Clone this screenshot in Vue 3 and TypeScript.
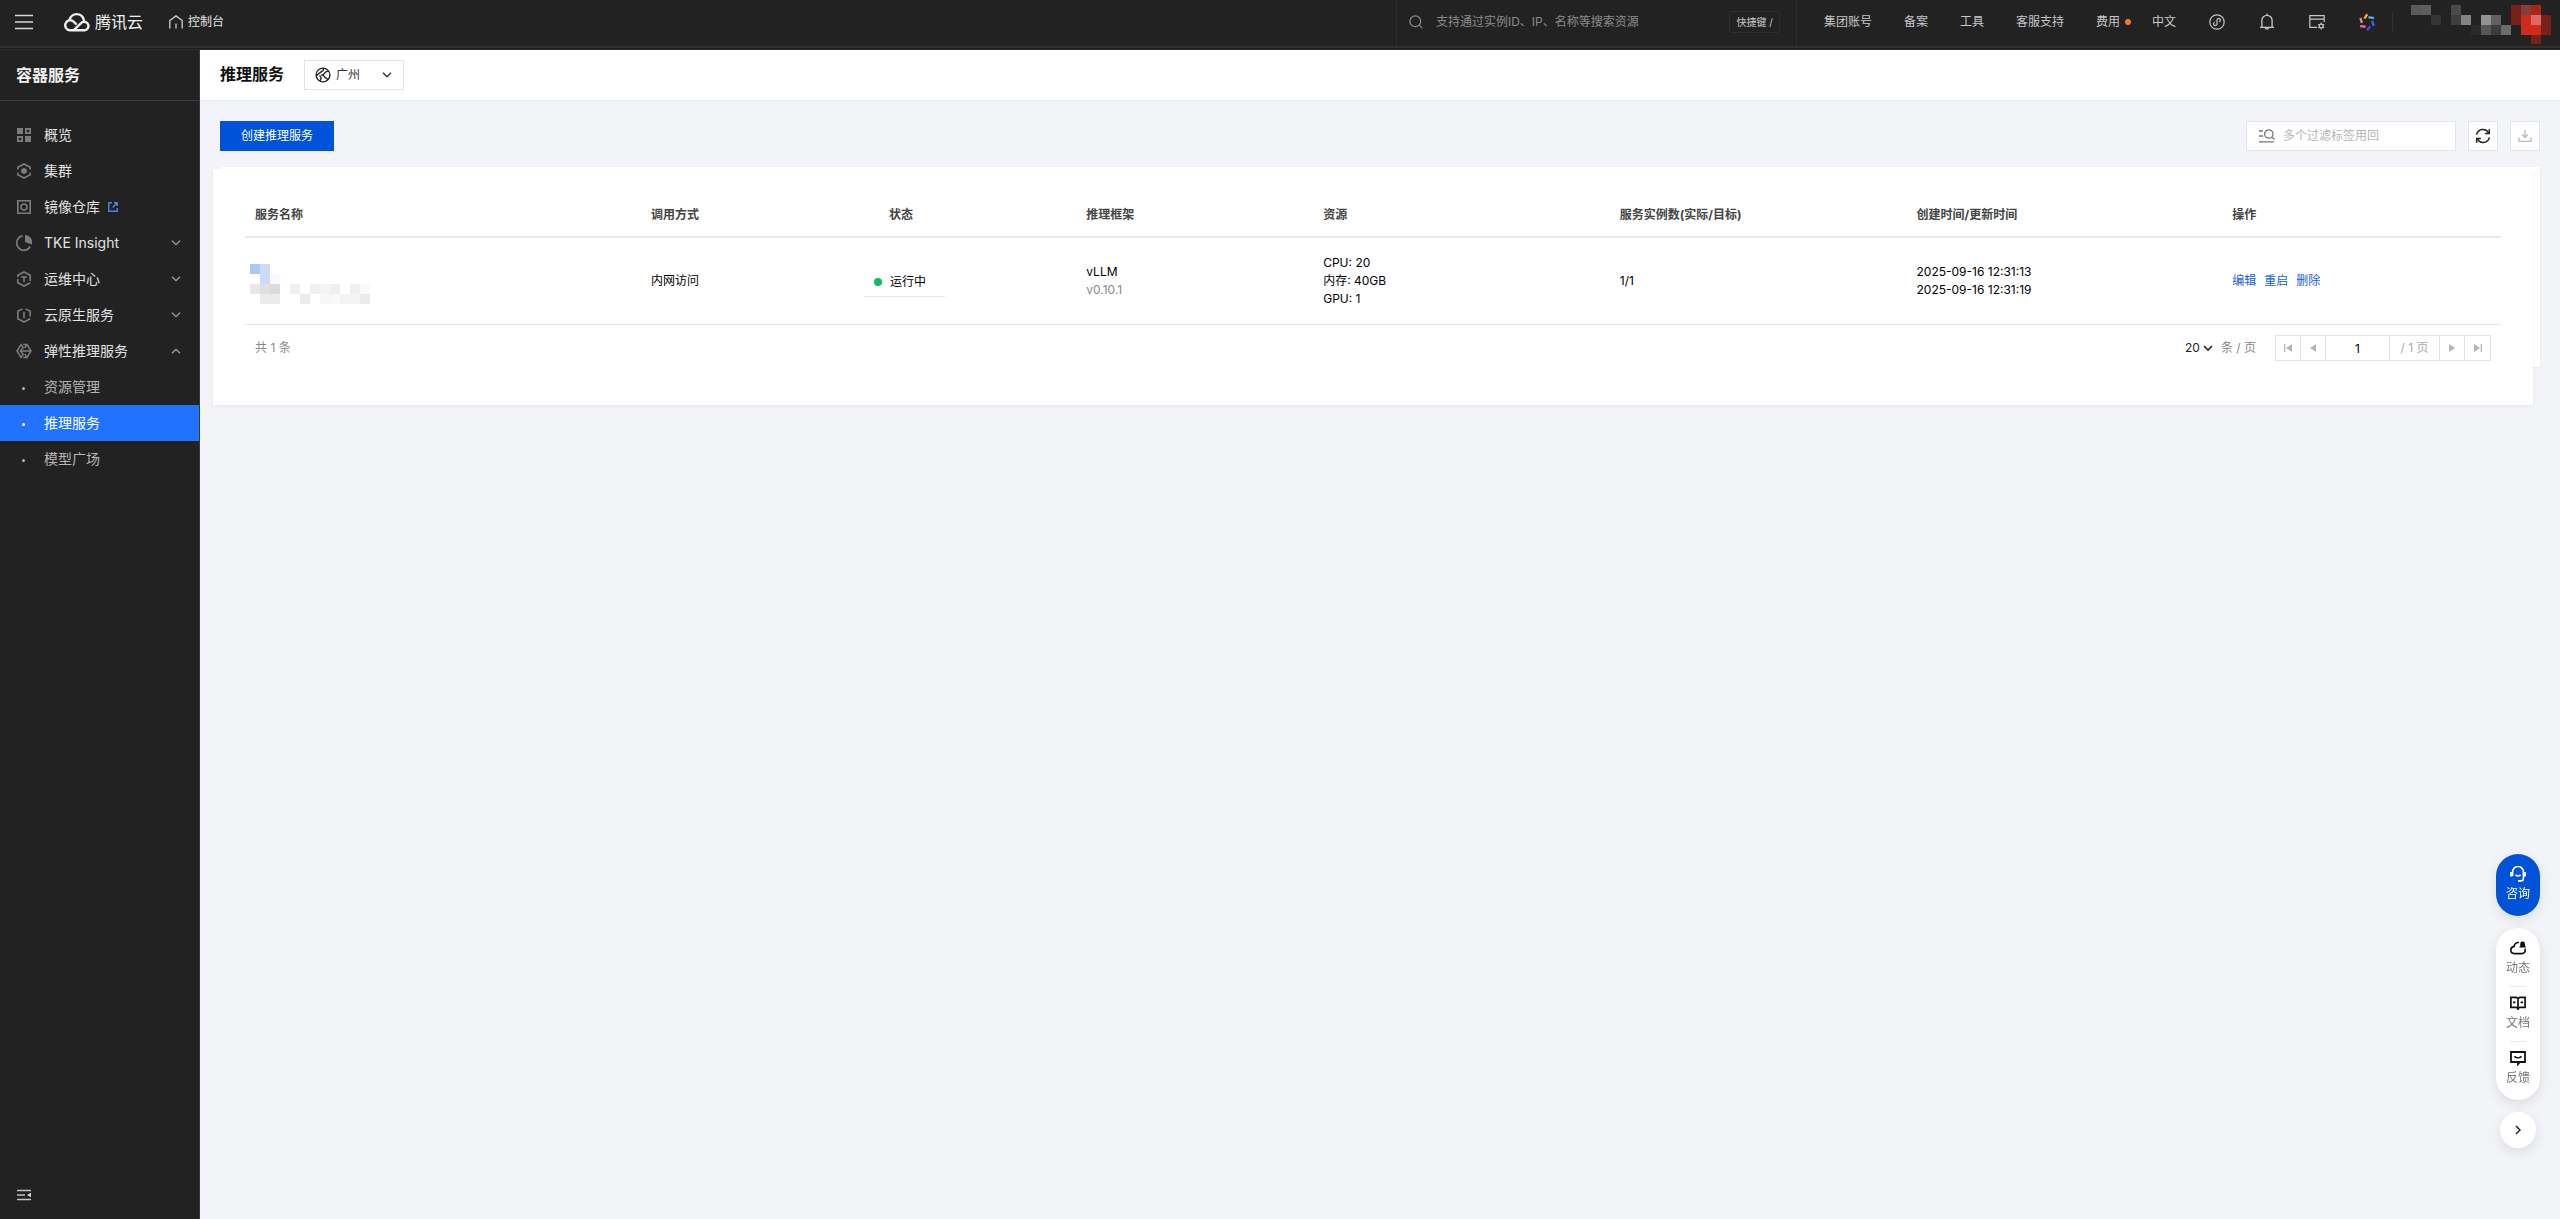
<script setup lang="ts">
import { ref } from 'vue'

interface MenuEntry {
  label: string
  icon: string
  external?: boolean
  arrow?: 'down' | 'up'
}

interface Tile {
  x: number
  y: number
  c: string
}

const menu: MenuEntry[] = [
  { label: '概览', icon: 'grid' },
  { label: '集群', icon: 'cluster' },
  { label: '镜像仓库', icon: 'registry', external: true },
  { label: 'TKE Insight', icon: 'insight', arrow: 'down' },
  { label: '运维中心', icon: 'ops', arrow: 'down' },
  { label: '云原生服务', icon: 'native', arrow: 'down' },
  { label: '弹性推理服务', icon: 'infer', arrow: 'up' },
]
const subMenu = ['资源管理', '推理服务', '模型广场']
const activeSub = ref('推理服务')

const navLinks = ['集团账号', '备案', '工具', '客服支持', '费用', '中文']
const headers = ['服务名称', '调用方式', '状态', '推理框架', '资源', '服务实例数(实际/目标)', '创建时间/更新时间', '操作']

const accountTiles: Tile[] = [
  { x: 0, y: 0, c: '#5a5a5a' }, { x: 1, y: 0, c: '#5e5e5e' }, { x: 2, y: 1, c: '#353535' },
  { x: 4, y: 0, c: '#4a4a4a' }, { x: 4, y: 1, c: '#3e3e3e' }, { x: 5, y: 1, c: '#838383' },
  { x: 6, y: 2, c: '#2a2a2a' }, { x: 7, y: 1, c: '#929292' }, { x: 7, y: 2, c: '#565656' },
  { x: 8, y: 1, c: '#616161' }, { x: 8, y: 2, c: '#3c3c3c' }, { x: 9, y: 2, c: '#6c6c6c' },
  { x: 10, y: 0, c: '#78211b' }, { x: 10, y: 1, c: '#78211b' }, { x: 11, y: 0, c: '#823f3b' },
  { x: 11, y: 1, c: '#d12a1b' }, { x: 11, y: 2, c: '#d12a1b' }, { x: 12, y: 0, c: '#a72519' },
  { x: 12, y: 1, c: '#dd6b62' }, { x: 12, y: 2, c: '#d12a1b' }, { x: 12, y: 3, c: '#78211b' },
  { x: 13, y: 1, c: '#78211b' }, { x: 13, y: 2, c: '#78211b' },
]
const nameTiles: Tile[] = [
  { x: 0, y: 0, c: '#adc6f3' }, { x: 1, y: 0, c: '#ccdcf8' }, { x: 1, y: 1, c: '#ccdcf8' }, { x: 2, y: 1, c: '#f7faff' },
  { x: 0, y: 2, c: '#e8e8e8' }, { x: 1, y: 2, c: '#e0e0e0' }, { x: 2, y: 2, c: '#dbdbdb' },
  { x: 1, y: 3, c: '#ebebeb' }, { x: 2, y: 3, c: '#ebebeb' }, { x: 4, y: 2, c: '#efefef' }, { x: 5, y: 3, c: '#ebebeb' },
  { x: 6, y: 2, c: '#f0f0f0' }, { x: 7, y: 2, c: '#f4f4f4' }, { x: 8, y: 2, c: '#efefef' }, { x: 10, y: 2, c: '#f0f0f0' },
  { x: 11, y: 2, c: '#fafafa' }, { x: 7, y: 3, c: '#f7f7f7' }, { x: 8, y: 3, c: '#f9f9f9' }, { x: 9, y: 3, c: '#f3f3f3' },
  { x: 10, y: 3, c: '#f3f3f3' }, { x: 11, y: 3, c: '#ebebeb' },
]

const keyword = ref('')
const filter = ref('')
const page = ref('1')
const pageSize = ref('20')
const region = ref('广州')
</script>

<template>
  <div class="app">
    <header class="topbar">
      <button class="plain burger" aria-label="菜单">
        <svg width="18" height="16" viewBox="0 0 18 16" stroke="#d8d8d8" stroke-width="1.4"><path d="M0 1.5h18M0 8h18M0 14.5h18" /></svg>
      </button>
      <a class="logo" href="#">
        <svg width="26" height="20" viewBox="0 0 26 20" fill="none" stroke="#f0f0f0" stroke-width="2.4" stroke-linecap="round" stroke-linejoin="round">
          <path d="M9.5 18.3 18.2 10.2A4.3 4.3 0 1 1 20.6 18.3H6.4A5 5 0 1 1 9.6 9.6L12 11.8" />
          <path d="M5.6 7.6A7.3 7.3 0 0 1 19.8 7.8" />
        </svg>
        <span>腾讯云</span>
      </a>
      <a class="console" href="#">
        <svg width="14" height="14" viewBox="0 0 14 14" fill="none" stroke="#d0d0d0" stroke-width="1.3"><path d="M.8 13.4V5.6L7 .9l6.2 4.7v7.8M7 8.6v4.8" /></svg>
        <span>控制台</span>
      </a>
      <label class="search">
        <svg width="14" height="14" viewBox="0 0 14 14" fill="none" stroke="#8c8c8c" stroke-width="1.2"><circle cx="6.3" cy="6.3" r="5.4" /><path d="m10.2 10.2 3.2 3.2" /></svg>
        <input v-model="keyword" type="text" aria-label="搜索资源" placeholder="支持通过实例ID、IP、名称等搜索资源" />
        <span class="hotkey">快捷键 /</span>
      </label>
      <nav class="links">
        <a v-for="l in navLinks" :key="l" href="#">{{ l }}<i v-if="l === '费用'" class="badge"></i></a>
      </nav>
      <div class="tools">
        <button class="plain" aria-label="小程序">
          <svg width="16" height="16" viewBox="0 0 16 16" fill="none" stroke="#c8c8c8" stroke-width="1.2"><circle cx="8" cy="8" r="7.2" /><path d="M5.8 8.2A1.7 1.7 0 1 0 8 9.9V6.1a1.7 1.7 0 1 1 2.2 1.7" /></svg>
        </button>
        <button class="plain" aria-label="消息">
          <svg width="16" height="18" viewBox="0 0 16 18" fill="none" stroke="#c8c8c8" stroke-width="1.3"><path d="M1 14.3h14M2.9 14V7.4a5.1 5.1 0 0 1 10.2 0V14M8 .4v1.9M6.2 14.8a1.9 1.9 0 0 0 3.6 0" /></svg>
        </button>
        <button class="plain" aria-label="控制台设置">
          <svg width="16" height="16" viewBox="0 0 16 16" fill="none" stroke="#c8c8c8" stroke-width="1.2"><path d="M8 13.4H.8V1.6h14.4V8M.8 5.2h14.4" /><circle cx="12.2" cy="12" r="1.9" /><path d="M12.2 8.6v1.5M12.2 13.9v1.5M9.2 10.3l1.3.8M13.9 12.9l1.3.8M9.2 13.7l1.3-.8M13.9 11.1l1.3-.8" /></svg>
        </button>
        <button class="plain" aria-label="智能助手">
          <svg width="18" height="18" viewBox="0 0 18 18" fill="none" stroke-width="2.3" stroke-linecap="square">
            <path d="M7 4.6 8.6 2.2" stroke="#f7b01e" /><path d="m11.6 4.4 3.2.6" stroke="#4cb6f2" /><path d="m14.4 9 1 2.8" stroke="#2f6cf0" />
            <path d="m11.6 14.2-1.8 2.2" stroke="#4b45e8" /><path d="m6.4 13.6-3-.4" stroke="#f06ba5" /><path d="m3.6 8.8-.9-2.8" stroke="#f58a7c" />
          </svg>
        </button>
      </div>
      <svg class="account" width="140" height="39" viewBox="0 0 140 39" shape-rendering="crispEdges">
        <rect v-for="(t, i) in accountTiles" :key="i" :x="t.x * 10" :y="t.y * 10" width="10" height="10" :fill="t.c" />
      </svg>
    </header>

    <div class="body">
      <aside class="side">
        <h2>容器服务</h2>
        <ul class="menu">
          <li v-for="m in menu" :key="m.label">
            <a href="#">
              <span class="mi">
                <svg width="16" height="16" viewBox="0 0 16 16" fill="none" stroke="#7d7d7d" stroke-width="1.6">
                  <template v-if="m.icon === 'grid'">
                    <path d="M1 1h6v6H1zM9 9h6v6H9z" fill="#7d7d7d" stroke="none" /><path d="M9.9 1.9h4.2v4.2H9.9zM1.9 9.9h4.2v4.2H1.9z" stroke-width="1.8" />
                  </template>
                  <template v-else-if="m.icon === 'cluster'">
                    <path d="M1.8 6.6V4.3L8 1l6.2 3.3v2.3M1.8 9.4v2.3L8 15l6.2-3.3V9.4" /><path d="m8 4.8 2.9 1.6v3.2L8 11.2 5.1 9.6V6.4z" fill="#7d7d7d" stroke="none" />
                  </template>
                  <template v-else-if="m.icon === 'registry'"><path d="M1.8 1.8h12.4v12.4H1.8z" /><circle cx="8" cy="8" r="3" /></template>
                  <template v-else-if="m.icon === 'insight'">
                    <path d="M6.6.9a7.2 7.2 0 1 0 7.6 10.6" /><path d="M9 0a7.4 7.4 0 0 1 6.9 9.6L9 7z" fill="#7d7d7d" stroke="none" />
                  </template>
                  <template v-else-if="m.icon === 'ops'">
                    <path d="M1.8 6V4.3L8 1l6.2 3.3V10M1.8 8v3.7L8 15l6.2-3.3" /><path d="M5 6h6M8 6v5" />
                  </template>
                  <template v-else-if="m.icon === 'native'">
                    <path d="M6.4 1.9 1.8 4.3v7.4L8 15l6.2-3.3M9.6 1.9l4.6 2.4V9.6" /><path d="M8 4.8v6.4" />
                  </template>
                  <template v-else>
                    <path d="M5.4.8 1 8l4.4 7.2M10.6.8 15 8l-4.4 7.2M5 1.6l2.2 3.2L4.4 8l2.8 3.2L5 14.4M7.2 1.6h3.6L8.8 5M7.2 14.4h3.6L8.8 11M4.4 8h10" stroke-width="1.5" />
                  </template>
                </svg>
              </span>
              <span class="mt">{{ m.label }}</span>
              <svg v-if="m.external" class="ext" width="10" height="10" viewBox="0 0 10 10" fill="none" stroke="#5185dd" stroke-width="1.4"><path d="M4 .8H.8v8.4h8.4V6M6 .8h3.2V4M9 1 4.6 5.4" /></svg>
              <svg v-if="m.arrow" class="arr" :class="m.arrow" width="10" height="6" viewBox="0 0 10 6" fill="none" stroke="#a0a0a0" stroke-width="1.3"><path d="m1 .7 4 4 4-4" /></svg>
            </a>
          </li>
          <li v-for="s in subMenu" :key="s" class="sub" :class="{ on: s === activeSub }">
            <a href="#" @click.prevent="activeSub = s"><span class="mi"><i></i></span><span class="mt">{{ s }}</span></a>
          </li>
        </ul>
        <button class="plain fold" aria-label="收起导航">
          <svg width="14" height="12" viewBox="0 0 14 12"><path d="M0 1.5h14M0 10.5h14M0 6h8" stroke="#c4c4c4" stroke-width="1.3" /><path d="M14 3.8v4.4L10 6z" fill="#d8d8d8" /></svg>
        </button>
      </aside>

      <main class="main">
        <div class="title">
          <h1>推理服务</h1>
          <label class="region">
            <svg width="16" height="16" viewBox="0 0 16 16" fill="none" stroke="#222" stroke-width="1.4"><circle cx="8" cy="8" r="6.9" /><path d="M8.8 1.2 8 3.6 4.8 5.8 1.4 8.6M5 14 6.2 11 4.6 8.4M13.4 3.8 10.6 5 8 8l1.6 2 3.6 2.6M8 8H6.2" /></svg>
            <select v-model="region" aria-label="地域"><option>广州</option></select>
            <svg width="10" height="6" viewBox="0 0 10 6" fill="none" stroke="#333" stroke-width="1.4"><path d="m1 .7 4 4 4-4" /></svg>
          </label>
        </div>

        <div class="content">
          <div class="toolbar">
            <button class="primary">创建推理服务</button>
            <label class="filter">
              <svg width="16" height="14" viewBox="0 0 16 14" fill="none" stroke="#777" stroke-width="1.3"><path d="M0 2h4M0 7h4M0 12.9h15" /><circle cx="9.8" cy="5" r="4.2" /><path d="m12.8 8 2.8 2.4" /></svg>
              <input v-model="filter" type="text" aria-label="过滤标签" placeholder="多个过滤标签用回" />
            </label>
            <button class="square" aria-label="刷新">
              <svg width="16" height="16" viewBox="0 0 16 16" fill="none" stroke="#222" stroke-width="1.5"><path d="M1.6 6.6A6.5 6.5 0 0 1 13.6 4.8M14.4 9.4A6.5 6.5 0 0 1 2.4 11.2" /><path d="M14.3 1.2v4.2h-4.2M1.7 14.8v-4.2h4.2" /></svg>
            </button>
            <button class="square" aria-label="下载">
              <svg width="14" height="14" viewBox="0 0 14 14" fill="none" stroke="#bbb" stroke-width="1.4"><path d="M1 8.4v4h12v-4M7 1v7M4 5.4l3 3 3-3" /></svg>
            </button>
          </div>

          <div class="stack">
            <section class="card">
              <table>
                <thead>
                  <tr><th v-for="(h, i) in headers" :key="h" :class="'c' + i" scope="col">{{ h }}</th></tr>
                </thead>
                <tbody>
                  <tr>
                    <td class="masked">
                      <svg width="120" height="40" viewBox="0 0 120 40" shape-rendering="crispEdges">
                        <rect v-for="(t, i) in nameTiles" :key="i" :x="t.x * 10" :y="t.y * 10" width="10" height="10" :fill="t.c" />
                      </svg>
                    </td>
                    <td>内网访问</td>
                    <td><span class="status"><i></i>运行中</span></td>
                    <td>vLLM<br /><span class="muted">v0.10.1</span></td>
                    <td>CPU: 20<br />内存: 40GB<br />GPU: 1</td>
                    <td>1/1</td>
                    <td>2025-09-16 12:31:13<br />2025-09-16 12:31:19</td>
                    <td><div class="ops"><a href="#">编辑</a><a href="#">重启</a><a href="#">删除</a></div></td>
                  </tr>
                </tbody>
              </table>
              <div class="pager">
                <span class="total">共 1 条</span>
                <label class="size">
                  <select v-model="pageSize" aria-label="每页条数"><option>20</option></select>
                  <svg width="10" height="7" viewBox="0 0 10 7" fill="none" stroke="#222" stroke-width="1.6"><path d="m1 1 4 4 4-4" /></svg>
                  <span>条 / 页</span>
                </label>
                <div class="pages">
                  <button disabled aria-label="首页"><svg width="8" height="8" viewBox="0 0 8 8" fill="#b5b5b5"><path d="M0 0h1.3v8H0zM8 0v8L2 4z" /></svg></button>
                  <button disabled aria-label="上一页"><svg width="8" height="8" viewBox="0 0 8 8" fill="#b5b5b5"><path d="M7 0v8L1 4z" /></svg></button>
                  <input v-model="page" type="text" aria-label="页码" />
                  <span class="of">/ 1 页</span>
                  <button disabled aria-label="下一页"><svg width="8" height="8" viewBox="0 0 8 8" fill="#b5b5b5"><path d="M1 0v8l6-4z" /></svg></button>
                  <button disabled aria-label="末页"><svg width="8" height="8" viewBox="0 0 8 8" fill="#b5b5b5"><path d="M0 0v8l6-4zM6.7 0H8v8H6.7z" /></svg></button>
                </div>
              </div>
            </section>
          </div>
        </div>
      </main>
    </div>

    <div class="float">
      <button class="ask">
        <svg width="16" height="16" viewBox="0 0 16 16" fill="none" stroke="#fff" stroke-width="1.6"><path d="M2.6 10V5.9a5.4 5.4 0 0 1 10.8 0v6.3c0 1.6-1 2.7-2.6 2.7H8" /><path d="M1.2 6v4.6M14.8 6v4.6" stroke-width="2.2" /><path d="M5.4 8.8c1.6 1.5 3.6 1.5 5.2 0" /></svg>
        <span>咨询</span>
      </button>
      <div class="pill">
        <button>
          <svg width="16" height="16" viewBox="0 0 16 16" fill="none" stroke="#111" stroke-width="1.6"><path d="M9 2.5C6.2 2.1 4.4 4 4.2 6.4 2 6.8.8 8.2.8 10.1c0 2 1.5 3.5 3.6 3.5h7.2c2.3 0 3.6-1.4 3.6-3.3 0-.6-.1-1.1-.4-1.6" /><path d="M10.2 6.6V4a2.4 2.4 0 0 1 4.8 0v2.6h1v1H9.4v-1z" fill="#111" stroke="none" /></svg>
          <span>动态</span>
        </button>
        <button>
          <svg width="16" height="16" viewBox="0 0 16 16" fill="none" stroke="#111" stroke-width="1.7"><path d="M.9 2.4h5.4L8 3.4l1.7-1h5.4v10H9.8L8 13.6l-1.8-1.2H.9zM8 3v12M3 7.4h2.4M10.6 7.4H13" /></svg>
          <span>文档</span>
        </button>
        <button>
          <svg width="16" height="16" viewBox="0 0 16 16" fill="none" stroke="#111" stroke-width="1.8"><path d="M1 2h14v10H9.8L8 14.2V12H1z" /><path d="M4.4 6.4c2 1.8 5.2 1.8 7.2 0" stroke-width="1.5" /></svg>
          <span>反馈</span>
        </button>
      </div>
      <button class="next" aria-label="收起">
        <svg width="6" height="10" viewBox="0 0 6 10" fill="none" stroke="#222" stroke-width="1.5"><path d="m1 1 4 4-4 4" /></svg>
      </button>
    </div>
  </div>
</template>

<style>
html,
body,
#app {
  height: 100%;
}
body {
  margin: 0;
}
</style>

<style scoped>
.app {
  display: flex;
  flex-direction: column;
  min-height: 100%;
  position: relative;
  background: #f3f4f7;
  color: #000;
  font: 12px/18px Inter, 'Noto Sans CJK SC', sans-serif;
}
.app * {
  box-sizing: border-box;
}
svg {
  display: block;
  flex: none;
}
a {
  color: inherit;
  text-decoration: none;
}
button,
input,
select {
  margin: 0;
  padding: 0;
  font: inherit;
  color: inherit;
  outline: none;
  border-radius: 0;
}
select {
  appearance: none;
  border: 0;
  background: none;
}
.plain {
  display: flex;
  align-items: center;
  justify-content: center;
  border: 0;
  background: none;
}

.topbar {
  display: flex;
  align-items: center;
  height: 50px;
  padding: 0 9px 7px 15px;
  background: linear-gradient(#222 0 46px, #303030 46px 48px, #1c1c1c 48px 49px, #2b2b2b 49px);
  color: #c8c8c8;
}
.burger {
  width: 18px;
}
.logo {
  display: flex;
  align-items: center;
  gap: 5px;
  margin-left: 31px;
  color: #f0f0f0;
  font-size: 16px;
}
.console {
  display: flex;
  align-items: center;
  gap: 5px;
  margin-left: 26px;
  color: #e6e6e6;
}
.search {
  display: flex;
  align-items: center;
  width: 401px;
  height: 48px;
  margin: 0 11px 0 auto;
  padding: 0 16px 0 12px;
  border: solid #2e2e2e;
  border-width: 0 1px;
}
.search input {
  flex: 1;
  min-width: 0;
  margin-left: 13px;
  border: 0;
  background: none;
}
.search input::placeholder {
  color: #8c8c8c;
  opacity: 1;
}
.hotkey {
  padding: 0 6px;
  border: 1px solid #2e2e2e;
  border-radius: 2px;
  font-size: 10px;
  line-height: 20px;
}
.links {
  display: flex;
}
.links a {
  position: relative;
  padding: 0 16px;
}
.badge {
  position: absolute;
  top: 6px;
  right: 5px;
  width: 6px;
  height: 6px;
  border-radius: 50%;
  background: #ed7b2f;
}
.tools {
  display: flex;
  border-right: 1px solid #333;
}
.tools .plain {
  width: 50px;
  height: 18px;
}
.account {
  margin: 5px 0 0 18px;
  align-self: flex-start;
}

.body {
  display: flex;
  flex: 1;
}
.side {
  display: flex;
  flex-direction: column;
  width: 200px;
  flex: none;
  border-right: 1px solid #3a3a3a;
  background: #222;
  color: #e3e3e3;
  font-size: 14px;
}
.side h2 {
  margin: 0;
  padding: 0 16px;
  border-bottom: 1px solid #3a3a3a;
  color: #f0f0f0;
  font-size: 16px;
  line-height: 50px;
}
.menu {
  flex: 1;
  margin: 0;
  padding: 16px 0;
  list-style: none;
}
.menu a {
  display: flex;
  align-items: center;
  height: 36px;
  padding: 0 18px 0 16px;
}
.mi {
  display: flex;
  justify-content: center;
  width: 16px;
  margin-right: 12px;
}
.mi i {
  width: 3px;
  height: 3px;
  margin: 3px 1px 0 0;
  border-radius: 50%;
  background: currentColor;
}
.ext {
  margin-left: 8px;
}
.arr {
  margin-left: auto;
}
.arr.up {
  transform: rotate(180deg);
}
.sub {
  color: #b5b5b5;
}
.sub.on {
  background: #2173ff;
  color: #fff;
}
.fold {
  align-self: flex-start;
  margin: 0 0 18px 17px;
}

.main {
  flex: 1;
  min-width: 0;
}
.title {
  display: flex;
  align-items: center;
  gap: 20px;
  height: 51px;
  padding: 0 20px;
  border-bottom: 1px solid #e7eaf2;
  background: #fff;
}
.title h1 {
  margin: 0;
  padding-bottom: 2px;
  color: #111;
  font-size: 16px;
}
.region {
  display: flex;
  align-items: center;
  width: 100px;
  height: 30px;
  padding: 0 11px 0 10px;
  border: 1px solid #e0e4ee;
}
.region select {
  flex: 1;
  margin-left: 5px;
  color: #333;
}
.content {
  padding: 20px;
}
.toolbar {
  display: flex;
  gap: 12px;
}
.primary {
  height: 30px;
  padding: 0 21px;
  margin-right: auto;
  border: 0;
  background: #0052d9;
  color: #fff;
}
.filter {
  display: flex;
  align-items: center;
  width: 210px;
  height: 30px;
  padding: 0 12px;
  border: 1px solid #e0e4ee;
  background: #fff;
}
.filter input {
  flex: 1;
  min-width: 0;
  margin-left: 8px;
  border: 0;
  background: none;
}
.filter input::placeholder {
  color: #b5b5b5;
  opacity: 1;
}
.square {
  display: flex;
  align-items: center;
  justify-content: center;
  width: 30px;
  height: 30px;
  border: 1px solid #e0e4ee;
  background: #fff;
}
.stack {
  height: 200px;
  margin-top: 16px;
  padding-top: 2px;
  background: #fff;
  box-shadow: 0 1px 2px rgba(54, 58, 80, 0.08);
}
.card {
  margin: 0 7px 0 -7px;
  padding: 20px 32px 34px;
  background: #fff;
  box-shadow: 0 1px 3px rgba(54, 58, 80, 0.08);
}
table {
  width: 100%;
  border-collapse: separate;
  border-spacing: 0;
  table-layout: fixed;
}
th {
  height: 49px;
  padding: 5px 10px 0;
  border-bottom: 2px solid #e7e9f2;
  color: #444;
  text-align: left;
}
td {
  height: 87px;
  padding: 0 10px;
  border-bottom: 1px solid #e5e8f0;
}
.c0 { width: 17.55%; }
.c1 { width: 9.45%; }
.c2 { width: 9.85%; padding-left: 35px; }
.c3 { width: 10.5%; }
.c4 { width: 13.15%; }
.c5 { width: 13.15%; }
.c6 { width: 14%; }
.masked {
  padding: 6px 5px 0;
}
.status {
  display: flex;
  align-items: center;
  gap: 8px;
  width: 81px;
  height: 31px;
  padding: 2px 0 0 10px;
  border-bottom: 1px solid #e5e8f0;
}
.status i {
  width: 8px;
  height: 8px;
  border-radius: 50%;
  background: #0abf5b;
}
.muted {
  color: #888;
}
.ops {
  display: flex;
  gap: 8px;
  color: #1660e0;
}
.pager {
  display: flex;
  align-items: center;
  padding: 10px;
  color: #888;
}
.total {
  margin-right: auto;
}
.size {
  display: flex;
  align-items: center;
}
.size select {
  width: 18px;
  color: #222;
}
.size span {
  margin-left: 8px;
}
.pages {
  display: flex;
  margin-left: 19px;
  border: 1px solid #e0e4ee;
}
.pages > * {
  height: 24px;
  border: 0;
  border-right: 1px solid #e0e4ee;
  background: #fff;
}
.pages > :last-child {
  border-right: 0;
}
.pages button {
  display: flex;
  align-items: center;
  justify-content: center;
  width: 25px;
}
.pages input {
  width: 64px;
  color: #000;
  text-align: center;
}
.of {
  width: 50px;
  color: #aaa;
  line-height: 24px;
  text-align: center;
}

.float {
  position: fixed;
  right: 20px;
  bottom: 71px;
  display: flex;
  flex-direction: column;
  align-items: center;
  gap: 12px;
}
.float button {
  display: flex;
  flex-direction: column;
  align-items: center;
  border: 0;
  background: none;
}
.float .ask,
.pill,
.float .next {
  box-shadow: 0 4px 12px rgba(54, 58, 80, 0.12);
}
.float .ask {
  gap: 3px;
  width: 44px;
  height: 62px;
  padding-top: 12px;
  border-radius: 22px;
  background: #0052d9;
  color: #fff;
}
.pill {
  width: 44px;
  height: 172px;
  padding: 3px 0;
  border-radius: 22px;
  background: #fff;
  color: #777;
}
.float .pill button {
  gap: 3px;
  width: 16px;
  height: 55px;
  margin: 0 auto;
  padding-top: 8px;
  border-top: 1px solid #e5e8f0;
  white-space: nowrap;
}
.float .pill button:first-child {
  border-color: transparent;
}
.float .next {
  justify-content: center;
  width: 36px;
  height: 36px;
  border-radius: 50%;
  background: #fff;
}
</style>
